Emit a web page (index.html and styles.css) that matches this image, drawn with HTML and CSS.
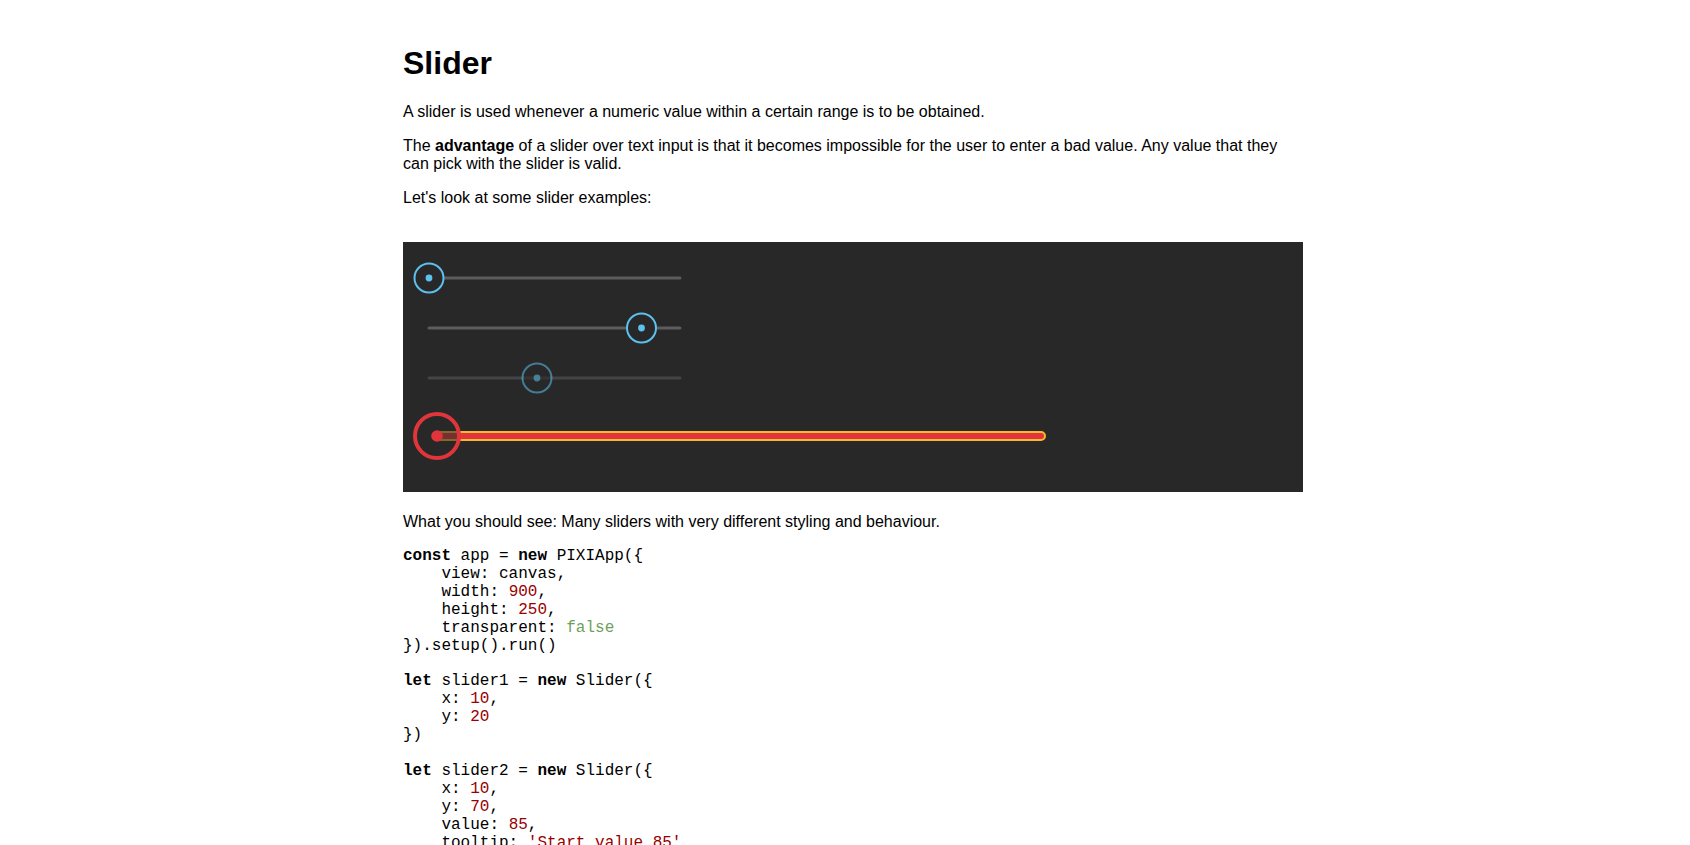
FILE: index.html
```html
<!DOCTYPE html>
<html>
<head>
<meta charset="utf-8">
<title>Slider</title>
<link rel="stylesheet" href="styles.css">
</head>
<body>
<main class="page">
  <h1 class="title">Slider</h1>
  <p class="text">A slider is used whenever a numeric value within a certain range is to be obtained.</p>
  <p class="text">The <strong>advantage</strong> of a slider over text input is that it becomes impossible for the user to enter a bad value. Any value that they can pick with the slider is valid.</p>
  <p class="text">Let's look at some slider examples:</p>

  <div class="stage">
    <svg class="canvas" width="900" height="250" viewBox="0 0 900 250" xmlns="http://www.w3.org/2000/svg">
      <rect width="900" height="250" fill="#282828"/>
      <!-- slider 1 -->
      <line x1="26" y1="36" x2="277" y2="36" stroke="#5c5c5c" stroke-width="3" stroke-linecap="round"/>
      <circle cx="26" cy="36" r="14.5" fill="#282828" stroke="#5cc1ef" stroke-width="2"/>
      <circle cx="26" cy="36" r="3.4" fill="#5cc1ef"/>
      <!-- slider 2 -->
      <line x1="26" y1="86" x2="277" y2="86" stroke="#5c5c5c" stroke-width="3" stroke-linecap="round"/>
      <circle cx="238.5" cy="86" r="14.5" fill="#282828" stroke="#5cc1ef" stroke-width="2"/>
      <circle cx="238.5" cy="86" r="3.4" fill="#5cc1ef"/>
      <!-- slider 3 (disabled) -->
      <g class="dim">
        <line x1="26" y1="136" x2="277" y2="136" stroke="#5c5c5c" stroke-width="3" stroke-linecap="round"/>
        <circle cx="134" cy="136" r="14.5" fill="#282828" stroke="#5cc1ef" stroke-width="2"/>
        <circle cx="134" cy="136" r="3.4" fill="#5cc1ef"/>
      </g>
      <!-- slider 4 -->
      <rect x="31" y="190" width="611" height="8" rx="4" ry="4" fill="#e0353a" stroke="#f5b82e" stroke-width="2"/>
      <circle cx="34" cy="194" r="22" fill="rgba(40,40,40,0.55)" stroke="#e0353a" stroke-width="4"/>
      <circle cx="34" cy="194" r="5.8" fill="#e0353a"/>
    </svg>
  </div>

  <p class="text">What you should see: Many sliders with very different styling and behaviour.</p>

<pre class="code"><b>const</b> app = <b>new</b> PIXIApp({
    view: canvas,
    width: <span class="num">900</span>,
    height: <span class="num">250</span>,
    transparent: <span class="lit">false</span>
}).setup().run()

<b>let</b> slider1 = <b>new</b> Slider({
    x: <span class="num">10</span>,
    y: <span class="num">20</span>
})

<b>let</b> slider2 = <b>new</b> Slider({
    x: <span class="num">10</span>,
    y: <span class="num">70</span>,
    value: <span class="num">85</span>,
    tooltip: <span class="str">'Start value 85'</span>
})

<b>let</b> slider3 = <b>new</b> Slider({
    x: <span class="num">10</span>,
    y: <span class="num">120</span>,
    value: <span class="num">40</span>,
    disabled: <span class="lit">true</span>
})

app.scene.addChild(slider1, slider2, slider3)
</pre>
</main>
</body>
</html>
```

FILE: styles.css
```css
html, body {
  margin: 0;
  padding: 0;
  background: #ffffff;
}

body {
  font-family: "Liberation Sans", Arial, Helvetica, sans-serif;
  font-size: 16px;
  color: #000000;
}

.page {
  width: 900px;
  margin: 0 auto;
  padding: 24px 0 0 16px;
}

.title {
  font-size: 32px;
  font-weight: bold;
  margin: 21px 0 21px 0;
}

.text {
  margin: 16px 0;
  line-height: normal;
}

.stage {
  margin: 35px 0 21px 0;
  width: 900px;
  height: 250px;
}

.canvas {
  display: block;
}

.dim > * {
  opacity: 0.55;
}

.code {
  font-family: "Liberation Mono", "Courier New", monospace;
  font-size: 16px;
  line-height: 17.9px;
  margin: 17px 0 0 0;
  color: #000000;
}

.code b {
  font-weight: bold;
}

.num,
.str {
  color: #990000;
}

.lit {
  color: #6f9f5a;
}
```
